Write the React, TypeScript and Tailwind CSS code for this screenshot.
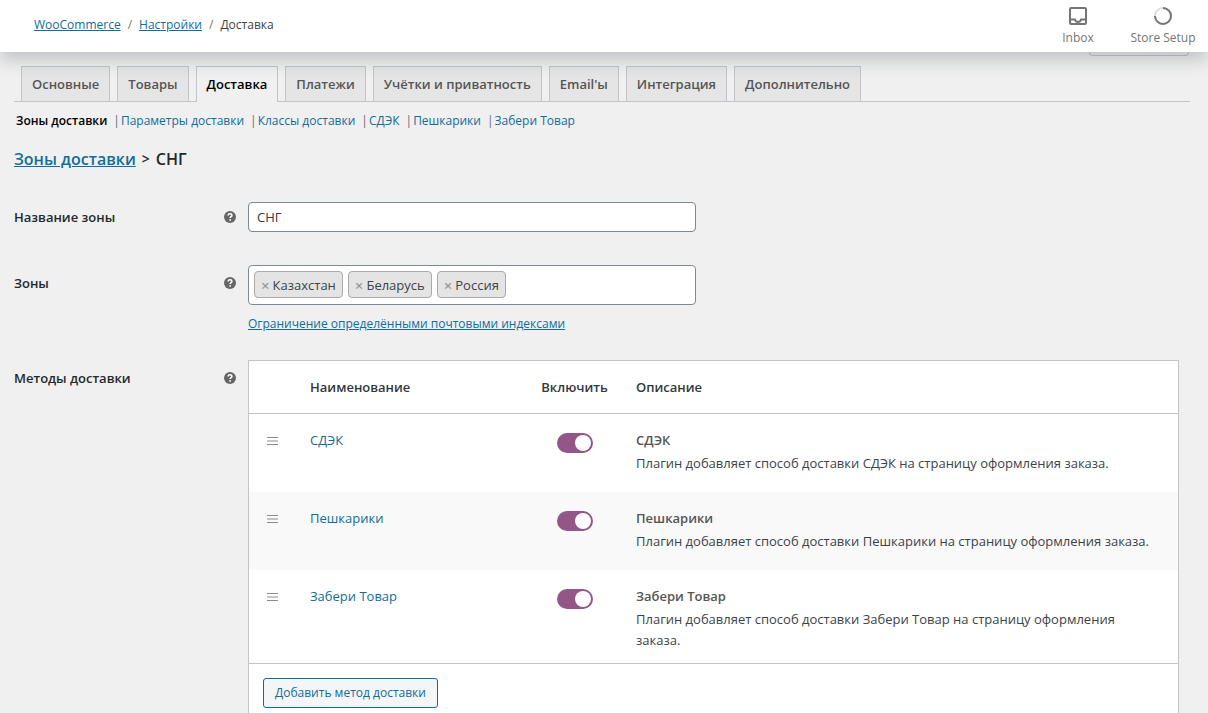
import { useState } from "react";
import type { ReactNode } from "react";
import { clsx } from "clsx";

const tabs = [
  "Основные",
  "Товары",
  "Доставка",
  "Платежи",
  "Учётки и приватность",
  "Email'ы",
  "Интеграция",
  "Дополнительно",
];

const sections = [
  "Зоны доставки",
  "Параметры доставки",
  "Классы доставки",
  "СДЭК",
  "Пешкарики",
  "Забери Товар",
];

const methods = [
  { name: "СДЭК", text: "Плагин добавляет способ доставки СДЭК на страницу оформления заказа." },
  { name: "Пешкарики", text: "Плагин добавляет способ доставки Пешкарики на страницу оформления заказа." },
  { name: "Забери Товар", text: "Плагин добавляет способ доставки Забери Товар на страницу оформления заказа." },
];

function InboxIcon() {
  return (
    <svg width="20" height="20" viewBox="0 0 20 20" fill="none" stroke="#757575" strokeWidth="2" aria-hidden="true">
      <rect x="2" y="2" width="16" height="16" rx="1" />
      <path d="M2 13.5H7C7.4 15 8.5 16 10 16S12.600 15 13 13.500H18" />
    </svg>
  );
}

function ProgressIcon() {
  return (
    <svg width="20" height="20" viewBox="0 0 20 20" fill="none" strokeWidth="2" aria-hidden="true">
      <circle cx="10" cy="10" r="8" stroke="#dddddd" />
      <path d="M10 2A8 8 0 1 1 2 10" stroke="#757575" />
    </svg>
  );
}

function HelpIcon() {
  return (
    <svg width="12" height="12" viewBox="0 0 12 12" className="shrink-0" role="img" aria-label="Справка">
      <circle cx="6" cy="6" r="6" fill="#666666" />
      <path
        d="M4.200 4.500C4.200 3.300 5 2.700 6 2.700S7.900 3.300 7.900 4.400C7.900 5.500 6.100 5.600 6.100 7"
        fill="none"
        stroke="#ffffff"
        strokeWidth="1.500"
      />
      <circle cx="6.100" cy="8.900" r="0.900" fill="#ffffff" />
    </svg>
  );
}

function HandleIcon() {
  return (
    <svg width="11" height="8" viewBox="0 0 11 8" className="block" stroke="#8c8c8c" aria-hidden="true">
      <path d="M0 .5H11M0 4H11M0 7.500H11" />
    </svg>
  );
}

function Row({ label, htmlFor, tall, children }: { label: string; htmlFor?: string; tall?: boolean; children: ReactNode }) {
  return (
    <div className="flex">
      <div className={clsx("flex w-[234px] shrink-0 items-start justify-between pr-3", tall ? "pt-2" : "pt-[5px]")}>
        <label htmlFor={htmlFor} className="text-[13px] leading-5 font-semibold text-[#23282d]">
          {label}
        </label>
        <span className="flex h-5 items-center">
          <HelpIcon />
        </span>
      </div>
      <div className="min-w-0 flex-1">{children}</div>
    </div>
  );
}

function Toggle({ label }: { label: string }) {
  const [on, setOn] = useState(true);
  return (
    <label className="mt-1 inline-flex cursor-pointer align-top">
      <input
        type="checkbox"
        checked={on}
        onChange={(e) => setOn(e.target.checked)}
        aria-label={label}
        className="peer sr-only"
      />
      <span
        className={clsx(
          "flex h-5 w-9 items-center rounded-full px-0.5",
          on ? "justify-end bg-[#935687]" : "justify-start bg-[#999999]",
        )}
      >
        <span className="size-4 rounded-full bg-white" />
      </span>
    </label>
  );
}

export default function App() {
  const [zones, setZones] = useState(["Казахстан", "Беларусь", "Россия"]);
  const link = "text-[#106d9c]";

  return (
    <div className="min-h-screen bg-[#f0f0f0] text-[13px] leading-5 text-[#3c434a] font-['Open_Sans','Noto_Sans',sans-serif]">
      <header className="relative z-10 flex h-[52px] items-center justify-between bg-white pl-[34px] shadow-[0_8px_16px_0_rgba(85,93,102,0.3)]">
        <nav aria-label="Путь" className="flex gap-[7px] pb-0.5 text-[12px]">
          <a href="#woocommerce" className={clsx(link, "underline")}>WooCommerce</a>
          <span className="text-[#757575]">/</span>
          <a href="#settings" className={clsx(link, "underline")}>Настройки</a>
          <span className="text-[#757575]">/</span>
          <span>Доставка</span>
        </nav>
        <div className="flex text-[12px] text-[#757575]">
          <button type="button" className="flex w-20 flex-col items-center gap-0.5 pt-0.5">
            <InboxIcon />
            Inbox
          </button>
          <button type="button" className="flex w-[90px] flex-col items-center gap-0.5 pt-0.5">
            <ProgressIcon />
            Store Setup
          </button>
        </div>
      </header>

      <div className="flex justify-end pr-[19px]" aria-hidden="true">
        <div className="h-1 w-[100px] rounded-b border border-t-0 border-[#c3c4c7] bg-[#f0f0f0]" />
      </div>

      <main className="pr-[18px] pl-[14px]">
        <nav aria-label="Разделы" className="mt-[10px] flex gap-[7px] border-b border-[#c3c4c7] pl-[7px]">
          {tabs.map((t) => (
            <a
              key={t}
              href="#tab"
              className={clsx(
                "border border-b-0 border-[#c3c4c7] px-[10px] pt-[5px] text-[13px] leading-[24px] font-semibold whitespace-nowrap",
                t === "Доставка"
                  ? "-mb-px bg-[#f0f0f0] pb-[6px] text-black"
                  : "bg-[#e5e5e5] pb-[5px] text-[#555555]",
              )}
            >
              {t}
            </a>
          ))}
        </nav>

        <ul className="mt-[9px] flex pl-[2px] text-[12px]">
          {sections.map((s, i) => (
            <li key={s} className="flex">
              <a href="#section" className={i === 0 ? "font-semibold text-black" : link}>{s}</a>
              {i < sections.length - 1 && <span className="pr-px pl-[6px] text-[#646970]">|</span>}
            </li>
          ))}
        </ul>

        <h2 className="mt-4 flex gap-[6px] text-[16px] leading-6 font-semibold text-[#23282d]">
          <a href="#zones" className={clsx(link, "underline")}>Зоны доставки</a>
          <span className="text-[14px]">&gt;</span>
          <span>СНГ</span>
        </h2>

        <form className="mt-[31px]" onSubmit={(e) => e.preventDefault()}>
          <Row label="Название зоны" htmlFor="zone-name">
            <input
              id="zone-name"
              type="text"
              defaultValue="СНГ"
              className="block h-[30px] w-full max-w-[448px] rounded border border-[#7e8993] bg-white px-2 text-[13px] text-[#32373c]"
            />
          </Row>

          <div className="mt-[33px]">
            <Row label="Зоны" tall>
              <div className="flex min-h-10 max-w-[448px] flex-wrap gap-[5px] rounded border border-[#7e8993] bg-white p-[5px]">
                {zones.map((z) => (
                  <span
                    key={z}
                    className="flex h-[27px] items-center gap-[3px] rounded border border-[#aaaaaa] bg-[#e4e4e4] px-[6px]"
                  >
                    <button
                      type="button"
                      aria-label={`Удалить ${z}`}
                      onClick={() => setZones(zones.filter((x) => x !== z))}
                      className="text-[15px] font-semibold text-[#999999]"
                    >
                      ×
                    </button>
                    {z}
                  </span>
                ))}
              </div>
              <a href="#postcodes" className={clsx(link, "mt-[9px] inline-block text-[12px] leading-5 underline")}>
                Ограничение определёнными почтовыми индексами
              </a>
            </Row>
          </div>

          <div className="mt-[26px]">
            <Row label="Методы доставки" tall>
              <div className="mr-[11px] border border-b-0 border-[#c3c4c7] bg-white">
                <table className="w-full table-fixed border-separate border-spacing-0 text-left">
                  <colgroup>
                    <col className="w-[61px]" />
                    <col className="w-[219px]" />
                    <col className="w-[91px]" />
                    <col />
                  </colgroup>
                  <thead>
                    <tr className="h-[53px] text-[#32373c]">
                      <td className="border-b border-[#c3c4c7]" />
                      <th scope="col" className="border-b border-[#c3c4c7] font-semibold">Наименование</th>
                      <th scope="col" className="border-b border-[#c3c4c7] text-center font-semibold">Включить</th>
                      <th scope="col" className="border-b border-[#c3c4c7] pl-4 font-semibold">Описание</th>
                    </tr>
                  </thead>
                  <tbody className="align-top">
                    {methods.map((m) => (
                      <tr key={m.name} className="h-[78px] even:bg-[#f9f9f9]">
                        <td className="pt-[23px] pl-[18px]"><HandleIcon /></td>
                        <td className="pt-4">
                          <a href="#method" className={link}>{m.name}</a>
                        </td>
                        <td className="pt-[15px] text-center"><Toggle label={m.name} /></td>
                        <td className="pt-4 pr-4 pb-3 pl-4">
                          <strong className="block font-semibold text-[#555555]">{m.name}</strong>
                          <p className="mt-[3px] leading-[21px]">{m.text}</p>
                        </td>
                      </tr>
                    ))}
                  </tbody>
                  <tfoot>
                    <tr>
                      <td colSpan={4} className="border-t border-[#c3c4c7] p-[14px]">
                        <button
                          type="button"
                          className="h-[30px] rounded-[3px] border border-[#0071a1] bg-[#f3f5f6] px-[11px] text-[12px] text-[#106d9c]"
                        >
                          Добавить метод доставки
                        </button>
                      </td>
                    </tr>
                  </tfoot>
                </table>
              </div>
            </Row>
          </div>
        </form>
      </main>
    </div>
  );
}
